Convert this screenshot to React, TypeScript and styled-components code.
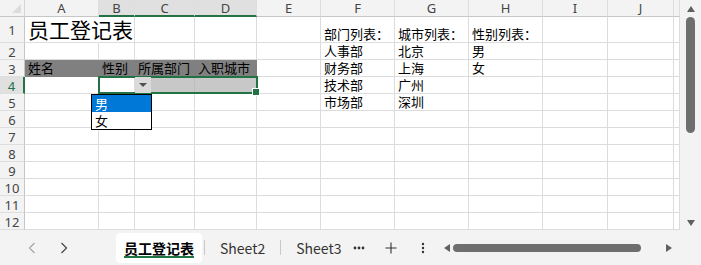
import React from 'react';
import styled, { createGlobalStyle, css } from 'styled-components';

const GlobalStyle = createGlobalStyle`
  html, body {
    margin: 0;
    padding: 0;
    background: #f3f3f3;
  }
  * {
    box-sizing: border-box;
  }
`;

const colWidths = [25, 74, 36, 60, 62, 64, 74, 74, 74, 65, 66, 6];
const rowHeights = [17, 26, 17, 17, 17, 17, 17, 17, 17, 17, 17, 17, 17];
const colNames = ['A', 'B', 'C', 'D', 'E', 'F', 'G', 'H', 'I', 'J', ''];

const cjk = `"Noto Sans CJK SC", "Noto Sans", sans-serif`;
const latin = `"Noto Sans", "Open Sans", sans-serif`;
const green = '#217346';
const gridLine = '#dcdcdc';

type Fill = 'dark' | 'tint' | undefined;

interface CellData {
  text?: string;
  fill?: Fill;
  big?: boolean;
  spill?: boolean;
}

// sheet content, row -> col index (0 = A)
const sheet: Record<number, Record<number, CellData>> = {
  1: {
    0: { text: '员工登记表', big: true, spill: true },
    5: { text: '部门列表：' },
    6: { text: '城市列表：' },
    7: { text: '性别列表：' },
  },
  2: { 5: { text: '人事部' }, 6: { text: '北京' }, 7: { text: '男' } },
  3: {
    0: { text: '姓名', fill: 'dark' },
    1: { text: '性别', fill: 'dark' },
    2: { text: '所属部门', fill: 'dark' },
    3: { text: '入职城市', fill: 'dark' },
    5: { text: '财务部' },
    6: { text: '上海' },
    7: { text: '女' },
  },
  4: { 2: { fill: 'tint' }, 3: { fill: 'tint' }, 5: { text: '技术部' }, 6: { text: '广州' } },
  5: { 5: { text: '市场部' }, 6: { text: '深圳' } },
};

const Frame = styled.div`
  width: 701px;
  height: 265px;
  display: flex;
  flex-direction: column;
  background: #f3f3f3;
  overflow: hidden;
`;

const Top = styled.div`
  display: flex;
  height: 230px;
`;

const Grid = styled.div`
  position: relative;
  display: grid;
  grid-template-columns: ${colWidths.map(w => `${w}px`).join(' ')};
  grid-template-rows: ${rowHeights.map(h => `${h}px`).join(' ')};
  background: #fff;
`;

const Corner = styled.div`
  position: relative;
  background: #f3f3f3;
  border-right: 1px solid #d6d6d6;
  border-bottom: 1px solid #c6c6c6;

  &::after {
    content: '';
    position: absolute;
    right: 3px;
    bottom: 3px;
    border-left: 9px solid transparent;
    border-bottom: 9px solid #dcdcdc;
  }
`;

const ColHead = styled.div<{ $sel?: boolean }>`
  display: flex;
  align-items: center;
  justify-content: center;
  font-family: ${latin};
  font-size: 13px;
  color: #444;
  background: ${p => (p.$sel ? '#e0e0e0' : '#f3f3f3')};
  border-right: 1px solid #dedede;
  border-bottom: ${p => (p.$sel ? `2px solid ${green}` : '1px solid #c6c6c6')};
`;

const RowHead = styled.div<{ $sel?: boolean }>`
  display: flex;
  align-items: center;
  justify-content: center;
  padding-top: 1px;
  font-family: ${latin};
  font-size: 13px;
  color: ${p => (p.$sel ? green : '#444')};
  background: ${p => (p.$sel ? '#e0e0e0' : '#f3f3f3')};
  border-bottom: 1px solid #dedede;
  border-right: ${p => (p.$sel ? `2px solid ${green}` : '1px solid #c6c6c6')};
`;

const fills = {
  dark: css`
    background: #808080;
    border-color: #808080;
  `,
  tint: css`
    background: #c8c8c8;
    border-color: #bdbdbd;
  `,
};

const Cell = styled.div<{ $fill?: Fill; $big?: boolean; $spill?: boolean }>`
  display: flex;
  align-items: flex-end;
  padding: 0 0 0 3px;
  white-space: nowrap;
  font-family: ${cjk};
  font-size: ${p => (p.$big ? '21px' : '13px')};
  line-height: ${p => (p.$big ? '25px' : '16px')};
  color: #000;
  border-right: 1px solid ${gridLine};
  border-bottom: 1px solid ${gridLine};
  ${p => p.$spill && 'border-right-color: transparent; z-index: 1;'}
  ${p => p.$fill && fills[p.$fill]}
`;

// selection B4:D4 lies over the cells
const Selection = styled.div`
  position: absolute;
  left: 98px;
  top: 76px;
  width: 160px;
  height: 18px;
  border: 2px solid ${green};
  z-index: 2;
  pointer-events: none;

  &::after {
    content: '';
    position: absolute;
    right: -4px;
    bottom: -4px;
    width: 6px;
    height: 6px;
    background: ${green};
    border: 1px solid #fff;
  }
`;

const DropButton = styled.div`
  position: absolute;
  left: 135px;
  top: 77px;
  width: 16px;
  height: 16px;
  background: #dadada;
  display: flex;
  align-items: center;
  justify-content: center;
  z-index: 3;

  &::after {
    content: '';
    border-left: 4px solid transparent;
    border-right: 4px solid transparent;
    border-top: 4px solid #505050;
  }
`;

const DropList = styled.div`
  position: absolute;
  left: 91px;
  top: 94px;
  width: 61px;
  height: 36px;
  background: #fff;
  border: 1px solid #000;
  z-index: 4;
  display: flex;
  flex-direction: column;
`;

const DropItem = styled.div<{ $active?: boolean }>`
  height: 17px;
  padding-left: 3px;
  font-family: ${cjk};
  font-size: 13px;
  line-height: 17px;
  color: ${p => (p.$active ? '#fff' : '#000')};
  background: ${p => (p.$active ? '#0078d7' : 'transparent')};
`;

const VScroll = styled.div`
  flex: 1;
  display: flex;
  flex-direction: column;
  align-items: center;
  padding: 6px 0 4px 0;
  background: #f3f3f3;
`;

const Arrow = styled.div<{ $dir: 'up' | 'down' | 'left' | 'right' }>`
  width: 0;
  height: 0;
  ${p =>
    p.$dir === 'up'
      ? 'border-left: 4px solid transparent; border-right: 4px solid transparent; border-bottom: 6px solid #606060;'
      : p.$dir === 'down'
      ? 'border-left: 4px solid transparent; border-right: 4px solid transparent; border-top: 6px solid #606060;'
      : p.$dir === 'left'
      ? 'border-top: 4px solid transparent; border-bottom: 4px solid transparent; border-right: 6px solid #606060;'
      : 'border-top: 4px solid transparent; border-bottom: 4px solid transparent; border-left: 6px solid #606060;'}
`;

const VThumb = styled.div`
  width: 9px;
  height: 116px;
  margin-top: 5px;
  border-radius: 5px;
  background: #6e6e6e;
`;

const Spacer = styled.div`
  flex: 1;
`;

const TabBar = styled.div`
  flex: 1;
  display: flex;
  align-items: center;
  background: #f3f3f3;
`;

const NavArea = styled.div`
  width: 116px;
  display: flex;
  padding-left: 16px;
`;

const NavButton = styled.div`
  width: 32px;
  display: flex;
  justify-content: center;
  align-items: center;
  height: 20px;
`;

const Tab = styled.div<{ $active?: boolean }>`
  position: relative;
  height: 30px;
  display: flex;
  align-items: center;
  padding: 0 13px;
  margin-top: 1px;
  font-family: ${cjk};
  font-size: 14px;
  color: ${p => (p.$active ? '#000' : '#333')};
  font-weight: ${p => (p.$active ? 600 : 400)};
  background: ${p => (p.$active ? '#fff' : 'transparent')};
  border-radius: 4px;

  ${p =>
    p.$active &&
    css`
      padding: 0 8px;
      width: 86px;
      justify-content: center;
      &::after {
        content: '';
        position: absolute;
        left: 8px;
        right: 8px;
        bottom: 5px;
        height: 2px;
        background: ${green};
      }
    `}
`;

const TabSep = styled.div`
  width: 1px;
  height: 15px;
  margin: 0 2px;
  background: #c8c8c8;
`;

const Tools = styled.div`
  display: flex;
  margin-left: -12px;
`;

const ToolButton = styled.div`
  width: 32px;
  height: 20px;
  display: flex;
  justify-content: center;
  align-items: center;
`;

const HScroll = styled.div`
  display: flex;
  align-items: center;
  margin-left: 5px;
`;

const HThumb = styled.div`
  width: 188px;
  height: 8px;
  margin: 0 25px 0 3px;
  border-radius: 4px;
  background: #6e6e6e;
`;

function Chevron({ dir, color }: { dir: 'left' | 'right'; color: string }) {
  return (
    <svg width="8" height="12" viewBox="0 0 8 12">
      <path
        d={dir === 'left' ? 'M6.5 1 L1.5 6 L6.5 11' : 'M1.5 1 L6.5 6 L1.5 11'}
        fill="none"
        stroke={color}
        strokeWidth="1.2"
      />
    </svg>
  );
}

export default function App() {
  const cells: React.ReactNode[] = [];

  cells.push(<Corner key="corner" />);
  colNames.forEach((name, i) => {
    cells.push(
      <ColHead key={`h${i}`} $sel={i >= 1 && i <= 3}>
        {name}
      </ColHead>
    );
  });

  for (let r = 1; r <= 12; r++) {
    cells.push(
      <RowHead key={`r${r}`} $sel={r === 4}>
        {r}
      </RowHead>
    );
    for (let c = 0; c < colNames.length; c++) {
      const d = sheet[r]?.[c] || {};
      cells.push(
        <Cell key={`c${r}-${c}`} $fill={d.fill} $big={d.big} $spill={d.spill}>
          {d.text}
        </Cell>
      );
    }
  }

  return (
    <Frame>
      <GlobalStyle />
      <Top>
        <Grid>
          {cells}
          <Selection />
          <DropButton />
          <DropList>
            <DropItem $active>男</DropItem>
            <DropItem>女</DropItem>
          </DropList>
        </Grid>
        <VScroll>
          <Arrow $dir="up" />
          <VThumb />
          <Spacer />
          <Arrow $dir="down" />
        </VScroll>
      </Top>
      <TabBar>
        <NavArea>
          <NavButton>
            <Chevron dir="left" color="#a6a6a6" />
          </NavButton>
          <NavButton>
            <Chevron dir="right" color="#444" />
          </NavButton>
        </NavArea>
        <Tab $active>员工登记表</Tab>
        <TabSep />
        <Tab>Sheet2</Tab>
        <TabSep />
        <Tab>Sheet3</Tab>
        <Tools>
          <ToolButton>
            <svg width="12" height="4" viewBox="0 0 12 4">
              <circle cx="2" cy="2" r="1.4" fill="#333" />
              <circle cx="6" cy="2" r="1.4" fill="#333" />
              <circle cx="10" cy="2" r="1.4" fill="#333" />
            </svg>
          </ToolButton>
          <ToolButton>
            <svg width="12" height="12" viewBox="0 0 12 12">
              <path d="M6 0.5 V11.5 M0.5 6 H11.5" stroke="#333" strokeWidth="1.1" />
            </svg>
          </ToolButton>
          <ToolButton>
            <svg width="4" height="12" viewBox="0 0 4 12">
              <circle cx="2" cy="2" r="1.2" fill="#333" />
              <circle cx="2" cy="6" r="1.2" fill="#333" />
              <circle cx="2" cy="10" r="1.2" fill="#333" />
            </svg>
          </ToolButton>
        </Tools>
        <HScroll>
          <Arrow $dir="left" />
          <HThumb />
          <Arrow $dir="right" />
        </HScroll>
      </TabBar>
    </Frame>
  );
}
